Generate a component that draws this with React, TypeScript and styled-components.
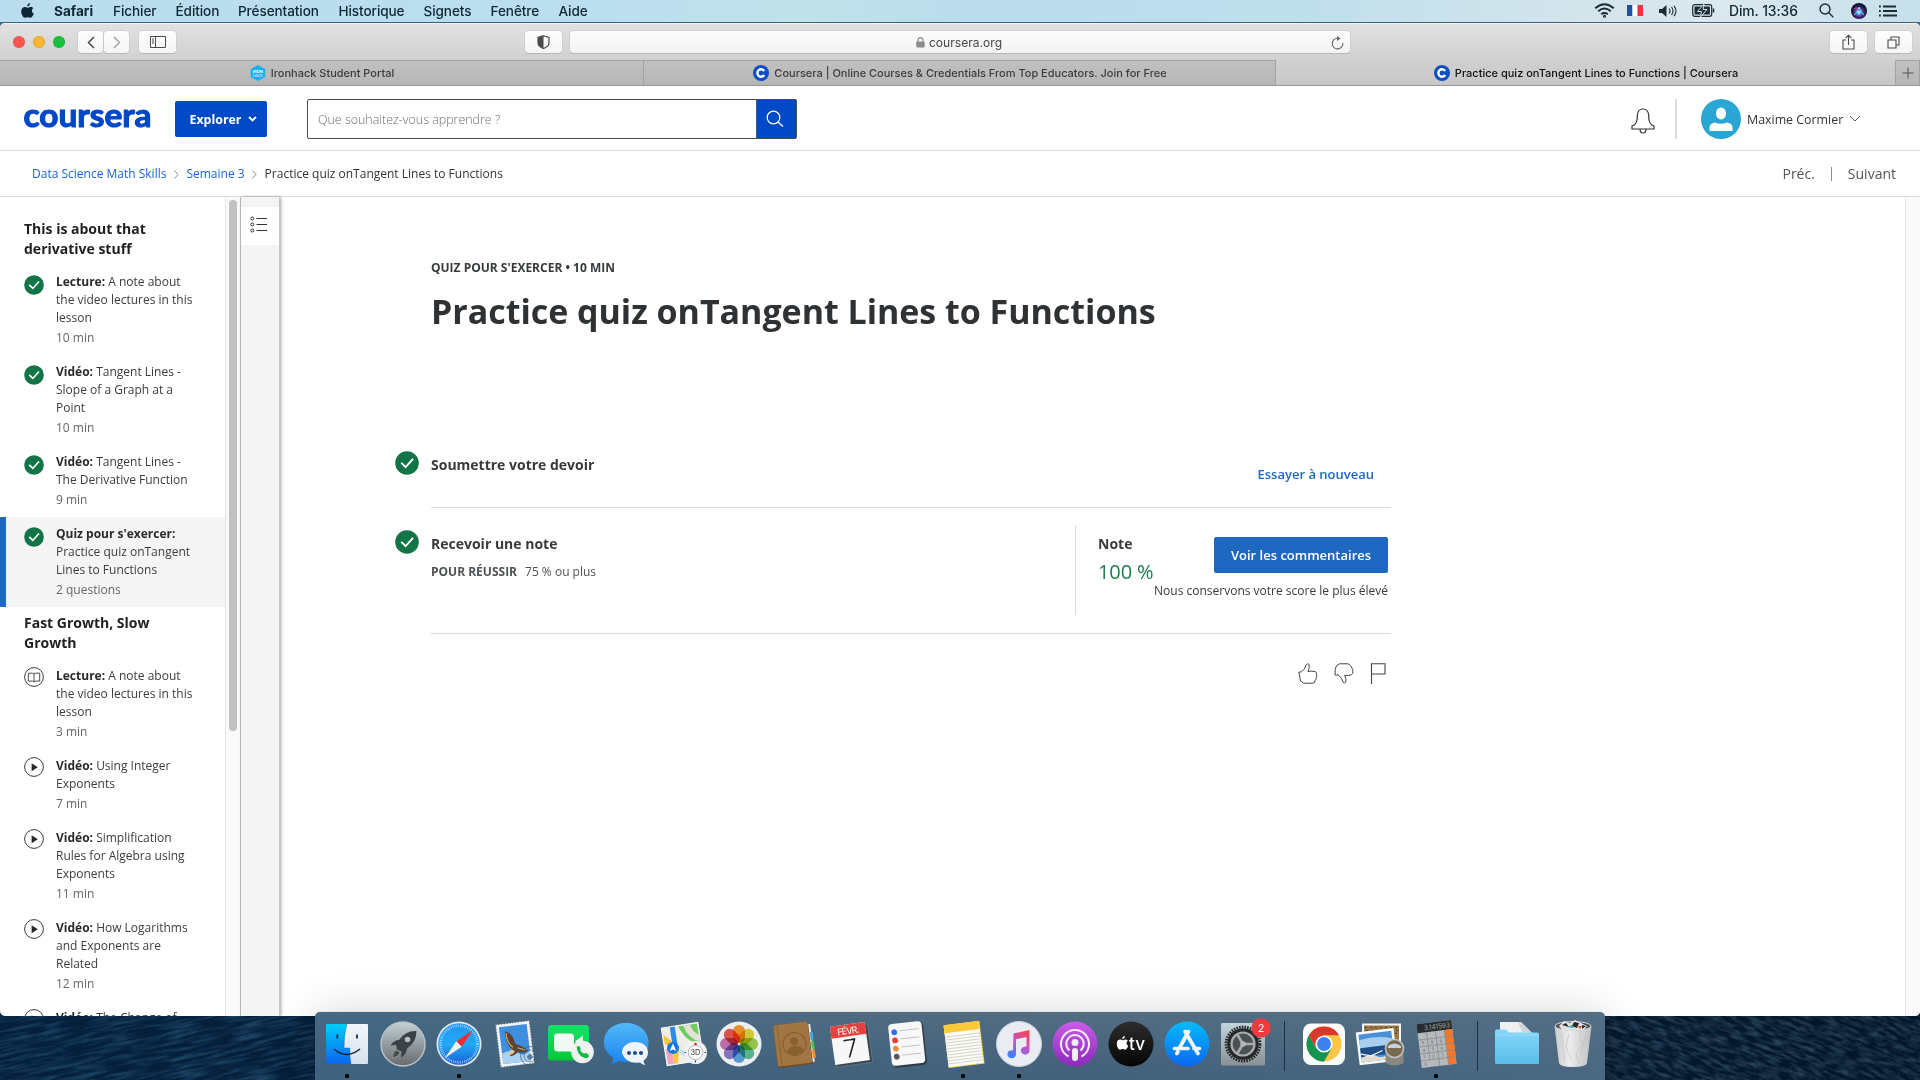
import React from 'react';
import styled, { createGlobalStyle } from 'styled-components';

const Global = createGlobalStyle`
  *, *::before, *::after { box-sizing: border-box; }
  html, body { margin: 0; padding: 0; }
  body { width: 1920px; height: 1080px; overflow: hidden; font-family: 'Open Sans', 'Noto Sans', sans-serif; color: #1f1f1f; }
  svg { display: block; flex: none; }
`;

const UI = "Inter, 'Liberation Sans', sans-serif";

/* ---------- desktop ---------- */
const Desktop = styled.div`
  position: relative;
  width: 1920px;
  height: 1080px;
  overflow: hidden;
  display: flex;
  flex-direction: column;
  background: #3f6c8e;
`;
const Sea = styled.svg`
  position: absolute;
  left: 0;
  bottom: 0;
`;
const MenuBar = styled.div`
  height: 23px;
  flex: none;
  display: flex;
  align-items: center;
  justify-content: space-between;
  padding: 0 23px 1px 21px;
  border-bottom: 1px solid #35648a;
  background: linear-gradient(90deg, #b9dcee 0%, #bcdff0 32%, #c0e2ea 42%, #b9dcee 52%, #bfdfec 68%, #d3e4ec 82%, #dbe8ee 90%, #c6dfeb 100%);
  font-family: ${UI};
  color: #0d2633;
`;
const MenuGroup = styled.div`
  display: flex;
  align-items: center;
`;
const MenuItem = styled.span<{ $w: number; $bold?: boolean }>`
  width: ${(p) => p.$w}px;
  font-size: 13.6px;
  line-height: 22px;
  font-weight: ${(p) => (p.$bold ? 700 : 450)};
  letter-spacing: ${(p) => (p.$bold ? '0' : '-0.1px')};
  white-space: nowrap;
`;
const StatusSlot = styled.span<{ $ml: number }>`
  display: block;
  margin-left: ${(p) => p.$ml}px;
`;
const Clock = styled.span`
  width: 71px;
  margin-left: 14px;
  font-size: 13.9px;
  font-weight: 450;
  letter-spacing: -0.1px;
  white-space: nowrap;
`;

/* ---------- browser window ---------- */
const Window = styled.div`
  position: relative;
  height: 993px;
  flex: none;
  display: flex;
  flex-direction: column;
  overflow: hidden;
  border-radius: 5px;
  background: #fff;
`;
const Toolbar = styled.div`
  height: 37px;
  flex: none;
  display: flex;
  align-items: center;
  padding: 0 8px 0 13px;
  border-top: 1px solid #f2f2f2;
  background: linear-gradient(#e2e1e2, #d2d1d2);
`;
const Light = styled.span<{ $c: string }>`
  width: 12px;
  height: 12px;
  margin-right: 8px;
  border-radius: 50%;
  background: ${(p) => p.$c};
  box-shadow: inset 0 0 0 0.5px rgba(0, 0, 0, 0.15);
`;
const ToolButton = styled.span<{ $w: number; $ml: number }>`
  width: ${(p) => p.$w}px;
  height: 22px;
  margin-left: ${(p) => p.$ml}px;
  display: flex;
  align-items: center;
  justify-content: center;
  border-radius: 4px;
  background: linear-gradient(#fefefe, #f4f4f4);
  box-shadow: 0 0 0 0.5px #c4c4c4, 0 1px 0.5px #ababab;
`;
const Address = styled.div`
  width: 780px;
  height: 22px;
  margin-left: 8px;
  display: flex;
  align-items: center;
  border-radius: 4px;
  background: linear-gradient(#fdfdfd, #f2f2f2);
  box-shadow: 0 0 0 0.5px #c4c4c4, 0 1px 0.5px #ababab;
  font: 400 12.1px/22px ${UI};
  color: #444;
  padding: 1px 6px 0 17px;
`;
const AddressText = styled.div`
  flex: 1;
  display: flex;
  align-items: center;
  justify-content: center;
  gap: 4px;
`;
const Tabs = styled.div`
  height: 26px;
  flex: none;
  display: flex;
  border-bottom: 1px solid #989798;
`;
const Tab = styled.div<{ $w: number; $active?: boolean }>`
  width: ${(p) => p.$w}px;
  display: flex;
  align-items: center;
  justify-content: center;
  gap: 5px;
  padding-left: 1px;
  font: 450 11px/24px ${UI};
  letter-spacing: 0;
  white-space: nowrap;
  color: ${(p) => (p.$active ? '#111' : '#3c3b3c')};
  border-top: 1px solid ${(p) => (p.$active ? '#d1d0d1' : '#a5a4a5')};
  border-right: 1px solid #a3a2a3;
  background: ${(p) => (p.$active ? 'linear-gradient(#d1d0d1, #c8c7c8)' : 'linear-gradient(#c1c0c1, #b7b6b7)')};
`;

/* ---------- site header ---------- */
const Header = styled.header`
  height: 65px;
  flex: none;
  display: flex;
  align-items: center;
  padding: 2px 59px 0 24px;
  border-bottom: 1px solid #dcdcdc;
`;
const Explore = styled.button`
  width: 92px;
  height: 36px;
  margin-left: 24px;
  padding: 0 0 0 5px;
  border: 0;
  border-radius: 2px;
  display: flex;
  align-items: center;
  justify-content: center;
  gap: 7px;
  background: #004ac8;
  color: #fff;
  font: 700 12.4px 'Open Sans', sans-serif;
`;
const Search = styled.div`
  width: 490px;
  height: 40px;
  margin-left: 40px;
  display: flex;
  border: 1px solid #4c4c4c;
  border-radius: 2px;
`;
const SearchField = styled.div`
  flex: 1;
  padding-left: 10px;
  font-size: 12.45px;
  font-weight: 300;
  line-height: 39px;
  color: #6c6c6c;
`;
const SearchButton = styled.div`
  width: 40px;
  display: flex;
  align-items: center;
  justify-content: center;
  padding-right: 4px;
  background: #004ac8;
  border-left: 1px solid #3d5a8c;
`;
const Account = styled.div`
  margin-left: auto;
  display: flex;
  align-items: center;
`;
const Bell = styled.span`
  padding-top: 3px;
`;
const Rule = styled.span`
  width: 2px;
  height: 40px;
  margin: 0 24px 0 20px;
  background: #dcdcdc;
`;
const UserName = styled.span`
  width: 97px;
  margin: 0 5px 0 6px;
  font-size: 12.4px;
  white-space: nowrap;
  color: #333;
`;

const Crumbs = styled.nav`
  height: 46px;
  flex: none;
  display: flex;
  align-items: center;
  padding: 0 24px 0 32px;
  border-bottom: 1px solid #dcdcdc;
  font-size: 12px;
  white-space: nowrap;
`;
const Crumb = styled.span<{ $link?: boolean }>`
  color: ${(p) => (p.$link ? '#1565d8' : '#333')};
`;
const CrumbArrow = styled.span`
  width: 20px;
  padding-top: 2px;
  display: flex;
  justify-content: center;
`;
const Pager = styled.div`
  margin-left: auto;
  display: flex;
  align-items: center;
  gap: 16px;
  font-size: 14px;
  color: #555;
`;
const PagerRule = styled.span`
  width: 1px;
  height: 14px;
  background: #8c8c8c;
`;

/* ---------- body ---------- */
const Body = styled.div`
  flex: 1;
  min-height: 0;
  display: flex;
`;
const Lessons = styled.aside`
  width: 225px;
  flex: none;
  overflow: hidden;
  padding-top: 16px;
`;
const SectionTitle = styled.h2`
  margin: 6px 0;
  padding: 0 24px;
  width: 200px;
  font-size: 14px;
  line-height: 20px;
  font-weight: 700;
  color: #1f1f1f;
`;
const Lesson = styled.div<{ $active?: boolean }>`
  display: flex;
  gap: 12px;
  padding: 8px 0 8px ${(p) => (p.$active ? 18 : 24)}px;
  border-left: ${(p) => (p.$active ? '6px solid #1f68c2' : '0 solid transparent')};
  background: ${(p) => (p.$active ? '#f5f5f5' : 'transparent')};
`;
const LessonIcon = styled.span<{ $done: boolean }>`
  width: 20px;
  padding-top: ${(p) => (p.$done ? 2 : 0)}px;
`;
const LessonText = styled.div`
  width: 138px;
  font-size: 12px;
  line-height: 18px;
  color: #3c3c3c;
`;
const Strong = styled.b`
  font-weight: 700;
  color: #2a2a2a;
`;
const Length = styled.div`
  padding-top: 2px;
  color: #666;
`;
const Track = styled.div`
  width: 16px;
  flex: none;
  padding: 3px 3px 0;
  border-left: 1px solid #e4e4e4;
  border-right: 1px solid #c2c2c2;
  background: #fafafa;
`;
const Thumb = styled.div`
  width: 8px;
  height: 531px;
  border-radius: 4px;
  background: #c1c1c1;
`;
const Rail = styled.div`
  width: 39px;
  flex: none;
  padding-top: 10px;
  background: #f4f4f4;
  border-right: 1px solid #c6c6c6;
  box-shadow: 1px 0 3px rgba(0, 0, 0, 0.35);
`;
const RailButton = styled.div`
  height: 38px;
  display: flex;
  align-items: center;
  padding: 0 0 4px 9px;
  border-radius: 2px;
  background: #fff;
`;
const Main = styled.main`
  flex: 1;
  padding: 62px 0 0 115px;
`;
const PageTrack = styled.div`
  width: 15px;
  flex: none;
  background: #fafafa;
  border-left: 1px solid #e6e6e6;
`;
const Kicker = styled.div`
  padding-left: 36px;
  font-size: 12px;
  line-height: 18px;
  font-weight: 700;
  letter-spacing: 0;
  color: #373a3c;
`;
const Title = styled.h1`
  margin: 11px 0 0;
  padding-left: 36px;
  height: 117px;
  font-size: 34px;
  line-height: 46px;
  font-weight: 700;
  letter-spacing: -0.03px;
  white-space: nowrap;
  color: #2f3234;
`;
const Step = styled.section<{ $h: number }>`
  display: flex;
  width: 996px;
  height: ${(p) => p.$h}px;
`;
const StepMark = styled.div<{ $pt: number }>`
  width: 36px;
  padding-top: ${(p) => p.$pt}px;
`;
const StepBody = styled.div<{ $pt: number }>`
  width: 960px;
  display: flex;
  padding-top: ${(p) => p.$pt}px;
  border-bottom: 1px solid #d8dadb;
`;
const StepCopy = styled.div`
  flex: 1;
`;
const StepTitle = styled.div`
  font-size: 14px;
  line-height: 20px;
  font-weight: 700;
  color: #373a3c;
`;
const Criteria = styled.div`
  padding-top: 8px;
  display: flex;
  gap: 8px;
  font-size: 12px;
  line-height: 20px;
  font-weight: 400;
  color: #4f5254;
`;
const Retry = styled.div`
  padding: 8px 17px 0 0;
  font-size: 13px;
  line-height: 22px;
  font-weight: 600;
  color: #1f68c2;
`;
const Grade = styled.div`
  width: 316px;
  height: 90px;
  margin-top: -9px;
  padding: 9px 3px 0 22px;
  display: flex;
  flex-direction: column;
  border-left: 1px solid #d8dadb;
`;
const GradeRow = styled.div`
  height: 48px;
  display: flex;
  justify-content: space-between;
`;
const Score = styled.div`
  padding-top: 4px;
  font-size: 20px;
  line-height: 28px;
  font-weight: 400;
  letter-spacing: -0.1px;
  color: #1b7d4f;
`;
const Feedback = styled.button`
  width: 174px;
  height: 36px;
  margin-top: 3px;
  padding: 0;
  border: 0;
  border-radius: 2px;
  background: #1f68c2;
  color: #fff;
  font: 600 13px 'Open Sans', sans-serif;
`;
const GradeNote = styled.div`
  align-self: flex-end;
  font-size: 12px;
  line-height: 18px;
  color: #373a3c;
`;
const Reactions = styled.div`
  width: 996px;
  padding: 29px 5px 0 0;
  display: flex;
  justify-content: flex-end;
  gap: 16px;
`;

/* ---------- dock ---------- */
const DockShade = styled.div`
  position: absolute;
  left: 235px;
  bottom: 0;
  width: 1450px;
  height: 148px;
  overflow: hidden;
  padding: 80px 80px 0;
`;
const Dock = styled.div`
  width: 1290px;
  height: 68px;
  display: flex;
  padding: 4px 4px 0;
  border-radius: 5px 5px 0 0;
  background: linear-gradient(90deg, rgba(60, 100, 130, 0.6), rgba(70, 100, 125, 0.2) 60%, rgba(80, 110, 135, 0.6)), linear-gradient(#566f84, #405f79);
  box-shadow: 0 0 44px rgba(0, 0, 0, 0.16), 0 0 1px rgba(0, 0, 0, 0.4);
`;
const DockItem = styled.div`
  width: 56px;
  display: flex;
  flex-direction: column;
  align-items: center;
`;
const Running = styled.span`
  width: 4px;
  height: 4px;
  margin-top: 2px;
  border-radius: 1.5px;
  background: #000;
`;
const DockRule = styled.span`
  width: 1px;
  height: 50px;
  margin: 5px 11.5px 5px 12.5px;
  background: #16324a;
`;

/* ---------- icons ---------- */
const Check = ({ size }: { size: number }) => (
  <svg width={size} height={size} viewBox="0 0 24 24">
    <circle cx="12" cy="12" r="11.8" fill="#137547" />
    <path d="M6.3 11.9 10.6 16.1 18 7.9" fill="none" stroke="#fff" strokeWidth="1.9" />
  </svg>
);
const Play = () => (
  <svg width="20" height="20" viewBox="0 0 20 20">
    <circle cx="10" cy="10" r="9.4" fill="#fff" stroke="#373a3c" strokeWidth="1" />
    <path d="M7.6 6.2v8L13.8 10.3z" fill="#25292b" />
  </svg>
);
const Book = () => (
  <svg width="20" height="20" viewBox="0 0 20 20" fill="none" stroke="#373a3c">
    <circle cx="10" cy="10" r="9.4" />
    <path d="M4.3 6.2h4.2q1.5 0 1.5 1 0-1 1.5-1h4.2v7.9h-4.4L10 15l-1.3-.9H4.3zM10 7v8" strokeWidth=".9" />
  </svg>
);
const CourseraMark = () => (
  <svg width="16" height="16" viewBox="0 0 16 16">
    <circle cx="8" cy="8" r="8" fill="#0f4fc4" />
    <path d="M11.2 10A3.7 3.7 0 1 1 11.2 6" fill="none" stroke="#fff" strokeWidth="2.4" />
  </svg>
);
const Chevron = ({ w, c, s = 1 }: { w: number; c: string; s?: number }) => (
  <svg width={w} height={w / 2 + 2} viewBox={`0 0 ${w} ${w / 2 + 2}`}>
    <path d={`M1 1l${w / 2 - 1} ${w / 2 - 1} ${w / 2 - 1} -${w / 2 - 1}`} fill="none" stroke={c} strokeWidth={s} />
  </svg>
);
const Apple = ({ w, c }: { w: number; c: string }) => (
  <svg width={w} height={w * 1.17} viewBox="0 0 14 16.4">
    <path fill={c} d="M9.8 0c.2 1.9-1.400 3.700-3.200 3.600C6.400 1.900 8 .2 9.800 0zM13.300 5.600c-2.300 1.500-2 4.700.5 5.700-.6 1.800-2.100 4.700-3.800 4.700-1.100 0-1.500-.7-2.800-.7s-1.700.7-2.800.7C2.200 16 .2 12.200.2 9c0-3.100 2-4.800 4-4.800 1.300 0 2.200.8 3.100.8.800 0 2-.9 3.600-.9 1 .1 1.900.6 2.400 1.500z" />
  </svg>
);

const I = ({ children }: { children: React.ReactNode }) => (
  <svg width="56" height="56" viewBox="0 0 56 56">{children}</svg>
);

const Finder = () => (
  <I>
    <defs>
      <linearGradient id="fa" x2="0" y2="1"><stop stopColor="#00cdfb" /><stop offset="1" stopColor="#0a66f0" /></linearGradient>
      <linearGradient id="fb" x2="0" y2="1"><stop stopColor="#f4f5fa" /><stop offset="1" stopColor="#d5e2ef" /></linearGradient>
    </defs>
    <rect x="7" y="8" width="42" height="40" rx="1" fill="url(#fa)" />
    <path d="M28 8h20a1 1 0 0 1 1 1v38a1 1 0 0 1-1 1H32q-1.500-8-1.200-16H25q0-14 3-24z" fill="url(#fb)" />
    <path d="M28 8q-3 10-3 24h5.800q-.3 8 1.200 16" fill="none" stroke="#1a6fb5" strokeWidth=".5" />
    <path d="M18.300 18.500v4M38 18.500v4" stroke="#12314b" strokeWidth="1.800" />
    <path d="M15 33q12 11 26 0" fill="none" stroke="#0d2236" strokeWidth="1.500" />
  </I>
);
const Launchpad = () => (
  <I>
    <defs><linearGradient id="lp" x2="0" y2="1"><stop stopColor="#c3d0d6" /><stop offset="1" stopColor="#676a6d" /></linearGradient></defs>
    <circle cx="28" cy="28" r="22" fill="url(#lp)" stroke="#b9c3c8" strokeWidth="1.400" />
    <path d="M41.500 15q-11-.5-17.500 9-5 0-8.500 5.500l5.500-.5 1 4.500 4.500 2-.5 6q5.500-3.500 6-9Q41.500 26 41.500 15z" fill="#3c4145" />
    <path d="M22 34q-4 1-4.500 8 6-1.500 7.500-5.500z" fill="#44494c" stroke="#a5aaad" strokeWidth=".6" />
    <circle cx="32.500" cy="23.500" r="2.800" fill="#b4bec3" />
  </I>
);
const Safari = () => (
  <I>
    <defs><linearGradient id="sf" x2="0" y2="1"><stop stopColor="#2196f5" /><stop offset=".5" stopColor="#21a9f6" /><stop offset="1" stopColor="#1b5fd8" /></linearGradient></defs>
    <circle cx="28" cy="28" r="22.500" fill="#e3e9f0" />
    <circle cx="28" cy="28" r="20.800" fill="url(#sf)" />
    <circle cx="28" cy="28" r="18.400" fill="none" stroke="#d5ebfc" strokeWidth="2.500" strokeDasharray=".6 1.300" />
    <path d="M42 14 30.700 30.700 25.300 25.300z" fill="#f02c2f" />
    <path d="M14 42 30.700 30.700 25.300 25.300z" fill="#f2f2f4" />
  </I>
);
const Mail = () => (
  <I>
    <g transform="rotate(-7 28 28)">
      <rect x="11" y="6.500" width="34" height="43" fill="#f3f3f3" />
      <rect x="11" y="6.500" width="34" height="43" fill="none" stroke="#4f6b82" strokeWidth="1.200" strokeDasharray="1.200 1.600" />
      <rect x="14" y="9.500" width="28" height="37" fill="#3f8fe0" />
      <path d="M14 36q8-4 15 1t13-1v10.500H14z" fill="#a9d2f2" />
      <path d="M19.500 14q5.500 2 7.500 8 1 4 2 6.500 7 2.500 11 8-4 2.500-10-.5-3 3.500-8.500 3.500 1.500-3.500 3-6.500-6.500-7-5-19z" fill="#5d4532" />
      <path d="M24 33q-3 1-5 5 6 1 8-3z" fill="#e0c8a4" /><path d="M20.500 16q-1 9 5 15M30 32l7 3" fill="none" stroke="#c9a67c" strokeWidth="1.200" />
    </g>
    <g fill="none" stroke="#3c5468" opacity=".65"><circle cx="43" cy="40" r="9.500" /><circle cx="43" cy="40" r="6" /><circle cx="43" cy="41" r="2.400" fill="#1f4f80" /></g>
  </I>
);
const FaceTime = () => (
  <I>
    <defs><linearGradient id="ft" x2="0" y2="1"><stop stopColor="#14e368" /><stop offset="1" stopColor="#06c736" /></linearGradient></defs>
    <rect x="5" y="9" width="41" height="35.500" rx="3.500" fill="url(#ft)" />
    <rect x="11" y="17.500" width="20" height="18" rx="3.500" fill="#f2f8f4" />
    <path d="M32.500 25l7.500-5.500v15L32.500 31z" fill="#f2f8f4" />
    <circle cx="39.500" cy="36" r="11.300" fill="#eff1f0" />
    <path d="M33.800 30.800q2.200-2.300 4 1.400-1.300 1.600.2 3.400 1.600 2 3.600 2 1.600-1.400 4 1.200 1.200 1.600-.8 3-2.200 1.200-5.800-1-5.200-3.600-5.200-10z" fill="#11bb45" />
  </I>
);
const Messages = () => (
  <I>
    <defs><linearGradient id="ms" x2="0" y2="1"><stop stopColor="#52b9fa" /><stop offset="1" stopColor="#1b82ef" /></linearGradient></defs>
    <path d="M27 7c13 0 22.500 8 22.500 19.500S40 46 27 46q-4 0-7-1-4 3-7.500 3 2-3 1.500-6.500Q5 36 5 26.500C5 15 14 7 27 7z" fill="url(#ms)" />
    <path d="M36 26c7.500 0 13 4 13 10.500 0 4-2 6.500-4.500 8.200q0 2.500 2 4.300-3.500-.3-5.500-2.500-14 2-18-9.500C23 30 28.500 26 36 26z" fill="#edf4fc" />
    <g fill="#1c4c88"><circle cx="30" cy="37" r="2" /><circle cx="36" cy="37" r="2" /><circle cx="42" cy="37" r="2" /></g>
  </I>
);
const Maps = () => (
  <I>
    <g transform="rotate(-9 28 28)">
      <rect x="9" y="9" width="37" height="38" fill="#efeee6" />
      <path d="M26 10h19v20Q32 28 26 10z" fill="#6ccc63" /><path d="M31 10q3 14 14 18v-7q-6-4-7-11z" fill="#e4e0d6" />
      <path d="M10 16l14 14-4 16h-4V30l-6-5z" fill="#fcc43e" /><path d="M10 30l6 5v11h-6z" fill="#f1a5bd" />
      <path d="M20 9.500v20" stroke="#2b8ae3" strokeWidth="5" />
      <path d="M24 34l10 10" stroke="#bcdcf0" strokeWidth="4" />
      <rect x="9" y="9" width="37" height="38" fill="none" stroke="#fafafa" />
    </g>
    <circle cx="18" cy="32" r="6" fill="#1377e6" /><path d="M18 27.500l3.300 7.500L18 33.500 14.700 35z" fill="#fff" />
    <circle cx="40.500" cy="36.500" r="11.500" fill="#f0f2f4" /><circle cx="40.500" cy="36.500" r="7.200" fill="#fff" stroke="#8e969c" strokeWidth=".7" />
    <path d="M40.500 44.500v2M31 36.500h-1.500M51 36.500h-1.500" stroke="#333" />
    <text x="40.500" y="39.300" fontFamily="Inter, sans-serif" fontSize="7.500" textAnchor="middle" fill="#333">3D</text>
    <circle cx="40.500" cy="28" r="1.300" fill="#e22" />
  </I>
);
const Photos = () => (
  <I>
    <circle cx="28" cy="28" r="22.500" fill="#eceef0" />
    {['#f9962b', '#e3d53a', '#a0cf50', '#5fbf94', '#5ea5df', '#8d7dc8', '#c777b4', '#ec5a52'].map((c, i) => (
      <rect key={c} x="22" y="9" width="12" height="18" rx="6" fill={c} style={{ mixBlendMode: 'multiply' }} transform={`rotate(${i * 45} 28 28)`} />
    ))}
  </I>
);
const Contacts = () => (
  <I>
    <g transform="rotate(-7 28 28)">
      <path d="M41 10h4.500v38H41z" fill="#e8e8e8" /><path d="M44 18h3v8h-3z" fill="#3fa9e0" /><path d="M44 27h3v8h-3z" fill="#52c35b" /><path d="M44 36h3v8h-3z" fill="#f0932c" />
      <rect x="8.500" y="7" width="35" height="43" rx="2" fill="#6f4a22" /><rect x="8.500" y="7" width="34.500" height="41.500" rx="2" fill="#a27643" />
      <path d="M12.500 7v41.500" stroke="#8b6234" />
      <circle cx="27.500" cy="28" r="11.500" fill="none" stroke="#86602f" strokeWidth="1.200" /><circle cx="27.500" cy="25" r="4.200" fill="#86602f" /><path d="M19 35q2-5 8.500-5t8.500 5q-8 8-17 0z" fill="#86602f" />
    </g>
  </I>
);
const CalendarIcon = () => (
  <I>
    <g transform="rotate(-8 28 28)">
      <path d="M11 11h36v38H11z" fill="#3b4751" stroke="#77828b" strokeWidth=".6" />
      <rect x="9.500" y="8" width="35" height="38.500" fill="#f7f7f7" /><rect x="9.500" y="8" width="35" height="12" fill="#e8403f" />
      <text x="27" y="17.700" fontFamily="Inter, sans-serif" fontSize="9" textAnchor="middle" textLength="22" fill="#fff">FÉVR.</text>
      <text x="27" y="41" fontFamily="'Open Sans', sans-serif" fontSize="25" fontWeight="300" textAnchor="middle" fill="#111" stroke="#111" strokeWidth=".3">7</text>
    </g>
  </I>
);
const Reminders = () => (
  <I>
    <g transform="rotate(-6 28 28)">
      <rect x="12" y="7.500" width="34" height="43" rx="4" fill="#2f3b45" /><rect x="11" y="6.500" width="33.500" height="42" rx="4" fill="#f8f8f8" />
      {['#2f6df3', '#e63d3a', '#ee8b34', '#53585c'].map((c, i) => (
        <g key={c}><circle cx="16.500" cy={15 + i * 8.2} r="2.900" fill={c} /><path d={`M22 ${14 + i * 8.2}h19`} stroke="#b5b8ba" strokeWidth=".8" /></g>
      ))}
    </g>
  </I>
);
const Notes = () => (
  <I>
    <g transform="rotate(-7 28 28)">
      <rect x="11" y="7" width="36" height="43" fill="#f7d768" /><rect x="11" y="8" width="35" height="41" fill="#fcfbf5" /><rect x="11" y="7" width="35" height="8" fill="#fcca38" />
      {[0, 1, 2, 3, 4, 5, 6, 7, 8, 9].map((i) => <path key={i} d={`M11 ${19 + i * 3}h35`} stroke="#cbcbc6" strokeWidth=".8" />)}
    </g>
  </I>
);
const Music = () => (
  <I>
    <defs><linearGradient id="mu" x1=".8" x2=".3" y2="1"><stop stopColor="#f5484c" /><stop offset=".5" stopColor="#c354cd" /><stop offset="1" stopColor="#3b83f7" /></linearGradient></defs>
    <circle cx="28" cy="28" r="22.500" fill="#e9ecf2" stroke="#cfd4da" />
    <path d="M22.500 17.500 38.500 14v20.500a4.300 4 0 1 1-3-3.700V21L25 23.300v14.900a4.300 4 0 1 1-3-3.700z" fill="url(#mu)" />
  </I>
);
const Podcasts = () => (
  <I>
    <defs><linearGradient id="po" x2="0" y2="1"><stop stopColor="#cb5ce8" /><stop offset="1" stopColor="#8a2abb" /></linearGradient></defs>
    <circle cx="28" cy="28" r="22.500" fill="url(#po)" />
    <g fill="none" stroke="#f5ebfa" strokeWidth="2"><path d="M21.500 40.500a14 14 0 1 1 13 0" /><path d="M22.500 34.500a8.700 8.700 0 1 1 11 0" /></g>
    <circle cx="28" cy="26.500" r="3.500" fill="#f5ebfa" /><rect x="25" y="32" width="6" height="13" rx="3" fill="#f5ebfa" />
  </I>
);
const TV = () => (
  <I>
    <defs><linearGradient id="tv" x2="0" y2="1"><stop stopColor="#2d2d2f" /><stop offset="1" stopColor="#050506" /></linearGradient></defs>
    <circle cx="28" cy="28" r="22.500" fill="url(#tv)" />
    <g transform="translate(13.500 20)"><Apple w={12} c="#fff" /></g>
    <text x="26" y="34" fontFamily="Inter, sans-serif" fontSize="17" fontWeight="500" textLength="16" lengthAdjust="spacingAndGlyphs" fill="#fff">tv</text>
  </I>
);
const AppStore = () => (
  <I>
    <defs><linearGradient id="as" x2="0" y2="1"><stop stopColor="#06bdfc" /><stop offset="1" stopColor="#0b66ee" /></linearGradient></defs>
    <circle cx="28" cy="28" r="22.500" fill="url(#as)" />
    <g stroke="#eff6fd" strokeWidth="3.700" strokeLinecap="round"><path d="M29.500 15.500 21 31M19 35.500l-1.200 2M26 15.500l13 22M15.500 32.500h13.500M35 32.500h5.500" /></g>
  </I>
);
const Settings = () => (
  <I>
    <defs><linearGradient id="se" x2="0" y2="1"><stop stopColor="#c2d5dc" /><stop offset="1" stopColor="#8a9093" /></linearGradient></defs>
    <rect x="6" y="7" width="44" height="42.500" rx="1.500" fill="url(#se)" />
    <circle cx="28" cy="28" r="17" fill="none" stroke="#24282a" strokeWidth="2.800" strokeDasharray="1.600 1.100" />
    <circle cx="28" cy="28" r="15.800" fill="#25292b" /><circle cx="28" cy="28" r="11.500" fill="#4c5153" stroke="#a6acaf" strokeWidth="2.200" />
    <path d="M28 28h11.500M28 28l-6-10M28 28l-6 10" stroke="#a6acaf" strokeWidth="2.500" /><circle cx="28" cy="28" r="2.800" fill="#b4b9bb" />
    <circle cx="46" cy="12" r="9.700" fill="#f23a3d" />
    <text x="46" y="15.800" fontFamily="Inter, sans-serif" fontSize="11" textAnchor="middle" fill="#fff">2</text>
  </I>
);
const Chrome = () => (
  <I>
    <rect x="7" y="7.500" width="42" height="41.500" rx="8" fill="#fafafa" />
    <circle cx="28" cy="28" r="17.500" fill="#fdc745" />
    <path d="M12.850 19.250A17.500 17.500 0 0 0 28 45.500L35.600 32.400 28 28 20.400 32.400z" fill="#159451" />
    <path d="M12.850 19.250A17.500 17.500 0 0 1 43.150 19.250H28l-7.600 13.100z" fill="#d9382d" />
    <circle cx="28" cy="28" r="8.600" fill="#fff" /><circle cx="28" cy="28" r="6.900" fill="#3f80ee" />
  </I>
);
const Preview = () => (
  <I>
    <rect x="10" y="7.500" width="39" height="33" fill="#f4f4f2" /><rect x="12" y="9.500" width="35" height="29" fill="#9a7646" /><path d="M13 11.500h33M14 14.500h32M13 17.500h33" stroke="#5b4126" strokeDasharray="2 3" />
    <g transform="rotate(-7 26 30)">
      <rect x="5.500" y="14" width="38" height="33" fill="#fafafa" /><rect x="8" y="16.500" width="33" height="28" fill="#4a90d9" /><path d="M8 22q17-3 33 2v7H8z" fill="#a8cfee" />
      <rect x="8" y="30" width="33" height="9" fill="#1e4d87" /><path d="M8 40q10-4 16 0t17-3v7.500H8z" fill="#e3ddd0" /><path d="M8 36l10 3 12-4" stroke="#f3f7fa" fill="none" strokeWidth="1.300" />
    </g>
    <path d="M33.500 36h18v11q-9 5-18 0z" fill="#8b8880" /><circle cx="42.500" cy="32.500" r="9" fill="#7a694e" stroke="#bcc0c2" strokeWidth="1.600" /><path d="M36 30q6-5 13 0v2H36z" fill="#c3d3df" />
  </I>
);
const Calculator = () => (
  <I>
    <g transform="rotate(-7 28 28)">
      <rect x="11" y="6" width="35" height="44" fill="#b7babc" /><rect x="11" y="6" width="35" height="9" fill="#272b2e" />
      <text x="44" y="13.200" fontFamily="Inter, sans-serif" fontSize="7.200" textAnchor="end" textLength="26" lengthAdjust="spacingAndGlyphs" fill="#98a09f">3.141593</text>
      <rect x="38" y="15" width="8" height="35" fill="#f5782a" />
      <g stroke="#7f8486" strokeWidth=".7"><path d="M11 22h35M11 29h35M11 36h35M11 43h35M20 15v28M29 15v35M38 15v35" /></g>
      <g fontFamily="Inter, sans-serif" fontSize="4" fill="#555">
        {['789', '456', '123'].map((r, j) => r.split('').map((d, i) => <text key={d} x={14 + i * 9} y={27 + j * 7}>{d}</text>))}
        <text x="14" y="48">0</text>
      </g>
    </g>
  </I>
);
const Folder = () => (
  <I>
    <defs><linearGradient id="fo" x2="0" y2="1"><stop stopColor="#86d6f9" /><stop offset="1" stopColor="#5bbdea" /></linearGradient></defs>
    <path d="M11 6h21l11 11v10H11z" fill="#f0f0f0" /><path d="M29 6l4 10 10 1L32 6z" fill="#d2d4d5" />
    <path d="M6 15q0-1.500 1.500-1.500H17l3 3h28q2 0 2 1.500v28.500q0 1.500-1.500 1.500h-41Q6 48 6 46.500z" fill="url(#fo)" />
    <path d="M6 19h44" stroke="#a4e2fc" strokeWidth=".7" />
  </I>
);
const Trash = () => (
  <I>
    <defs><linearGradient id="tr"><stop stopColor="#c9c9c9" /><stop offset=".4" stopColor="#ededed" /><stop offset="1" stopColor="#bfc0c1" /></linearGradient></defs>
    <ellipse cx="28" cy="10" rx="18" ry="4.500" fill="#4b5156" stroke="#d5d6d7" />
    <path d="M14 10l5-5 6 2 5-3 6 3 6 3-3 4H17z" fill="#dfe2e4" /><path d="M17 9l4-2 3 4zM29 6l5 1-2 5-5-2zM37 9l4 1-4 3z" fill="#2f2522" /><path d="M23 11l4-2 2 3z" fill="#29b0a4" /><path d="M33 10l4 0-2 3z" fill="#c9502f" />
    <path d="M9.500 10Q13 14.500 28 14.500t18.500-4.500L42 47q-1 4-14 4t-14-4z" fill="url(#tr)" />
    <path d="M16 18l4 28M24 17l-3 14 5 12M34 17l3 12-6 9 3 9M41 18l-5 20" stroke="#c2c4c5" strokeWidth=".8" fill="none" />
  </I>
);

/* ---------- data ---------- */
type LessonData = { kind: string; name: string; length: string; icon: 'done' | 'play' | 'book'; active?: boolean };
const sections: { title: string; lessons: LessonData[] }[] = [
  {
    title: 'This is about that derivative stuff',
    lessons: [
      { kind: 'Lecture:', name: 'A note about the video lectures in this lesson', length: '10 min', icon: 'done' },
      { kind: 'Vidéo:', name: 'Tangent Lines - Slope of a Graph at a Point', length: '10 min', icon: 'done' },
      { kind: 'Vidéo:', name: 'Tangent Lines - The Derivative Function', length: '9 min', icon: 'done' },
      { kind: "Quiz pour s'exercer:", name: 'Practice quiz onTangent Lines to Functions', length: '2 questions', icon: 'done', active: true },
    ],
  },
  {
    title: 'Fast Growth, Slow Growth',
    lessons: [
      { kind: 'Lecture:', name: 'A note about the video lectures in this lesson', length: '3 min', icon: 'book' },
      { kind: 'Vidéo:', name: 'Using Integer Exponents', length: '7 min', icon: 'play' },
      { kind: 'Vidéo:', name: 'Simplification Rules for Algebra using Exponents', length: '11 min', icon: 'play' },
      { kind: 'Vidéo:', name: 'How Logarithms and Exponents are Related', length: '12 min', icon: 'play' },
      { kind: 'Vidéo:', name: 'The Change of', length: '', icon: 'play' },
    ],
  },
];
const menus: [string, number][] = [['Fichier', 62.5], ['Édition', 62.5], ['Présentation', 100.5], ['Historique', 85], ['Signets', 67], ['Fenêtre', 68], ['Aide', 40]];
const dock: { icon: React.FC; running?: boolean }[][] = [
  [
    { icon: Finder, running: true }, { icon: Launchpad }, { icon: Safari, running: true }, { icon: Mail }, { icon: FaceTime }, { icon: Messages },
    { icon: Maps }, { icon: Photos }, { icon: Contacts }, { icon: CalendarIcon }, { icon: Reminders }, { icon: Notes, running: true },
    { icon: Music, running: true }, { icon: Podcasts }, { icon: TV }, { icon: AppStore }, { icon: Settings },
  ],
  [{ icon: Chrome }, { icon: Preview }, { icon: Calculator, running: true }],
  [{ icon: Folder }, { icon: Trash }],
];

export default function App() {
  return (
    <Desktop>
      <Global />
      <Sea width="1920" height="72" viewBox="0 0 1920 72">
        <defs>
          <linearGradient id="sea"><stop stopColor="#04203c" /><stop offset=".5" stopColor="#061c33" /><stop offset="1" stopColor="#041629" /></linearGradient>
          <filter id="swell" x="0" y="0" width="100%" height="100%" colorInterpolationFilters="sRGB">
            <feTurbulence type="fractalNoise" baseFrequency="0.03 0.3" numOctaves="4" seed="8" />
            <feColorMatrix values="0 0 0 0 .16  0 0 0 0 .34  0 0 0 0 .48  2.200 0 0 0 -.85" />
          </filter>
          <filter id="ripples" x="0" y="0" width="100%" height="100%" colorInterpolationFilters="sRGB">
            <feTurbulence type="fractalNoise" baseFrequency="0.07 0.3" numOctaves="4" seed="3" />
            <feColorMatrix values="0 0 0 0 .22  0 0 0 0 .34  0 0 0 0 .44  2.200 0 0 0 -.8" />
          </filter>
        </defs>
        <rect width="1920" height="72" fill="url(#sea)" />
        <g transform="rotate(-12 160 36)"><rect x="-60" y="-60" width="480" height="220" filter="url(#swell)" opacity=".7" /></g>
        <g transform="rotate(20 1760 36)"><rect x="1540" y="-120" width="480" height="320" filter="url(#ripples)" opacity=".7" /></g>
      </Sea>

      <MenuBar>
        <MenuGroup>
          <Apple w={13} c="#0d2633" />
          <StatusSlot $ml={20} />
          <MenuItem $w={59} $bold>Safari</MenuItem>
          {menus.map(([m, w]) => <MenuItem key={m} $w={w}>{m}</MenuItem>)}
        </MenuGroup>
        <MenuGroup>
          <svg width="21" height="15" viewBox="0 0 21 15" fill="none" stroke="#1b2c37" strokeWidth="1.900">
            <path d="M1.200 5.200Q10.500-2.800 19.800 5.200M4.200 8.200Q10.500 3 16.800 8.200M7.200 11.200q3.300-2.500 6.600 0" /><circle cx="10.500" cy="13.300" r=".6" />
          </svg>
          <StatusSlot $ml={12}><svg width="16" height="11"><path d="M0 0h5.500v11H0z" fill="#22509f" /><path d="M5.500 0h5v11h-5z" fill="#fff" /><path d="M10.500 0H16v11h-5.500z" fill="#ee3341" /></svg></StatusSlot>
          <StatusSlot $ml={16}>
            <svg width="18" height="12" viewBox="0 0 18 12"><path d="M0 4h3l4.500-4v12L3 8H0z" fill="#1b2c37" /><path d="M10 3.500q2 2.500 0 5M12.500 2q3 4 0 8M15 .8q4 5.200 0 10.400" fill="none" stroke="#1b2c37" strokeWidth="1.100" /></svg>
          </StatusSlot>
          <StatusSlot $ml={15}>
            <svg width="23" height="13" viewBox="0 0 23 13"><rect x=".7" y=".7" width="19" height="11.600" rx="2" fill="none" stroke="#1b2c37" strokeWidth="1.200" /><rect x="2.500" y="2.500" width="15.400" height="8" fill="#1b2c37" /><path d="M12 0 5.500 7.500h4L8.500 13 15 5.500h-4z" fill="#1b2c37" stroke="#cfe2ec" strokeWidth="1" /><path d="M21.500 4.500v4" stroke="#1b2c37" strokeWidth="1.500" /></svg>
          </StatusSlot>
          <Clock>Dim. 13:36</Clock>
          <StatusSlot $ml={19}><svg width="15" height="15" viewBox="0 0 15 15" fill="none" stroke="#1b2c37" strokeWidth="1.400"><circle cx="6" cy="6" r="5" /><path d="M9.600 9.600l4.700 4.700" /></svg></StatusSlot>
          <StatusSlot $ml={17}>
            <svg width="16" height="16" viewBox="0 0 16 16"><defs><radialGradient id="si" cx=".5" cy=".58"><stop stopColor="#f4fbff" /><stop offset=".25" stopColor="#58a8e8" /><stop offset=".55" stopColor="#5a2b8c" /><stop offset=".9" stopColor="#12142f" /></radialGradient></defs><circle cx="8" cy="8" r="8" fill="url(#si)" /><path d="M3 12Q7 10 8 4q1.500 5 5 8" fill="none" stroke="#6fe0f0" /><path d="M3 6q3-3 5 2" fill="none" stroke="#e0499b" /></svg>
          </StatusSlot>
          <StatusSlot $ml={12}><svg width="18" height="12" viewBox="0 0 18 12" stroke="#1b2c37" strokeWidth="1.800"><path d="M0 1.500h1.800M4 1.500h13M0 6h1.800M4 6h14M0 10.500h1.800M4 10.500h14" /></svg></StatusSlot>
        </MenuGroup>
      </MenuBar>

      <Window>
        <Toolbar>
          <Light $c="#fc5652" /><Light $c="#fdb532" /><Light $c="#18c23f" />
          <ToolButton $w={25} $ml={5}><svg width="8" height="13" fill="none" stroke="#4a4a4a" strokeWidth="1.500"><path d="M7 1 1.500 6.500 7 12" /></svg></ToolButton>
          <ToolButton $w={25} $ml={1}><svg width="8" height="13" fill="none" stroke="#a5a5a5" strokeWidth="1.500"><path d="M1 1l5.500 5.500L1 12" /></svg></ToolButton>
          <ToolButton $w={37} $ml={10}><svg width="16" height="12" fill="none" stroke="#4a4a4a"><path d="M.5.500h15v11H.500zM5.500.500v11M2 3h2M2 5h2M2 7h2" /></svg></ToolButton>
          <ToolButton $w={37} $ml={349}><svg width="13" height="14" viewBox="0 0 13 14"><path d="M6.500.7 12 2.500v5q0 4-5.500 6-5.500-2-5.500-6v-5z" fill="none" stroke="#4a4a4a" strokeWidth="1.200" /><path d="M6.500.7v12.800q-5.500-2-5.500-6v-5z" fill="#4a4a4a" /></svg></ToolButton>
          <Address>
            <AddressText>
              <svg width="9" height="11" viewBox="0 0 9 11"><rect x=".3" y="4.500" width="8.400" height="6" rx="1" fill="#8b8b8b" /><path d="M2 5V3q0-2.400 2.500-2.400T7 3v2" fill="none" stroke="#8b8b8b" strokeWidth="1.200" /></svg>
              coursera.org
            </AddressText>
            <svg width="13" height="14" viewBox="0 0 13 14"><path d="M11.800 7A5.300 5.300 0 1 1 6.500 2.300" fill="none" stroke="#666" strokeWidth="1.100" /><path d="M6 0l3.600 2.500L6 5z" fill="#666" /></svg>
          </Address>
          <ToolButton $w={37} $ml={480}><svg width="13" height="16" fill="none" stroke="#4a4a4a" strokeWidth="1.100"><path d="M4 6H1v9h11V6H9M6.500 11V1.200M3.700 4l2.800-2.800L9.300 4" /></svg></ToolButton>
          <ToolButton $w={37} $ml={8}><svg width="13" height="13" fill="none" stroke="#4a4a4a" strokeWidth="1.100"><path d="M1 4h8v8H1zM4 4V1h8v8H9" /></svg></ToolButton>
        </Toolbar>
        <Tabs>
          <Tab $w={644}>
            <svg width="16" height="16" viewBox="0 0 16 16"><path d="M8 0l7.300 4v8L8 16 .7 12V4z" fill="#15b2f0" /><text x="8" y="7.500" fontFamily="Inter, sans-serif" fontSize="4" fontWeight="700" textAnchor="middle" fill="#fff">IRON</text><text x="8" y="11.500" fontFamily="Inter, sans-serif" fontSize="3.600" textAnchor="middle" fill="#d0f0fc">HACK</text></svg>
            Ironhack Student Portal
          </Tab>
          <Tab $w={632}><CourseraMark />Coursera | Online Courses &amp; Credentials From Top Educators. Join for Free</Tab>
          <Tab $w={620} $active><CourseraMark />Practice quiz onTangent Lines to Functions | Coursera</Tab>
          <Tab $w={24}><svg width="12" height="12" stroke="#555"><path d="M6 .5v11M.5 6h11" /></svg></Tab>
        </Tabs>

        <Header>
          <svg width="127" height="40" viewBox="0 0 127 40">
            <text x="-.5" y="28" fontFamily="Lato, sans-serif" fontSize="32.500" fontWeight="700" textLength="128" lengthAdjust="spacingAndGlyphs" fill="#0048c8" stroke="#0048c8" strokeWidth="1.100">coursera</text>
          </svg>
          <Explore>Explorer <Chevron w={9} c="#fff" s={1.9} /></Explore>
          <Search>
            <SearchField>Que souhaitez-vous apprendre ?</SearchField>
            <SearchButton><svg width="18" height="18" fill="none" stroke="#fff" strokeWidth="1.200"><circle cx="7.500" cy="7.500" r="6.300" /><path d="M12 12l5 4.500" /></svg></SearchButton>
          </Search>
          <Account>
            <Bell><svg width="24" height="26" viewBox="0 0 24 26" fill="none" stroke="#333" strokeWidth="1.200"><path d="M1 21v-3q4-1 5-6 .3-2.500.3-5Q7 1 12 1t5.700 6q0 2.500.3 5 1 5 5 6v3zM9 21q0 4 3 4t3-4" /></svg></Bell>
            <Rule />
            <svg width="40" height="40"><circle cx="20" cy="20" r="20" fill="#2aa6d4" /><ellipse cx="20" cy="14.500" rx="5" ry="6" fill="#fff" /><path d="M8.500 32v-3.500q0-4 5.500-5 6 2.500 12 0 5.500 1 5.500 5V32z" fill="#fff" /></svg>
            <UserName>Maxime Cormier</UserName>
            <Chevron w={12} c="#555" />
          </Account>
        </Header>
        <Crumbs>
          <Crumb $link>Data Science Math Skills</Crumb>
          <CrumbArrow><svg width="5" height="9" fill="none" stroke="#888"><path d="M.5.500l3.500 4-3.500 4" /></svg></CrumbArrow>
          <Crumb $link>Semaine 3</Crumb>
          <CrumbArrow><svg width="5" height="9" fill="none" stroke="#888"><path d="M.5.500l3.500 4-3.500 4" /></svg></CrumbArrow>
          <Crumb>Practice quiz onTangent Lines to Functions</Crumb>
          <Pager><span>Préc.</span><PagerRule /><span>Suivant</span></Pager>
        </Crumbs>

        <Body>
          <Lessons>
            {sections.map((s) => (
              <React.Fragment key={s.title}>
                <SectionTitle>{s.title}</SectionTitle>
                {s.lessons.map((l) => (
                  <Lesson key={l.name} $active={l.active}>
                    <LessonIcon $done={l.icon === 'done'}>{l.icon === 'done' ? <Check size={20} /> : l.icon === 'book' ? <Book /> : <Play />}</LessonIcon>
                    <LessonText><Strong>{l.kind}</Strong> {l.name}<Length>{l.length}</Length></LessonText>
                  </Lesson>
                ))}
              </React.Fragment>
            ))}
          </Lessons>
          <Track><Thumb /></Track>
          <Rail>
            <RailButton>
              <svg width="18" height="17" fill="none" stroke="#333"><circle cx="2.300" cy="2.500" r="1.500" /><circle cx="2.300" cy="8.500" r="1.500" /><circle cx="2.300" cy="14.500" r="1.500" /><path d="M6.500 2.500H17M6.500 8.500H17M6.500 14.500H17" /></svg>
            </RailButton>
          </Rail>
          <Main>
            <Kicker>QUIZ POUR S'EXERCER • 10 MIN</Kicker>
            <Title>Practice quiz onTangent Lines to Functions</Title>
            <Step $h={103}>
              <StepMark $pt={46}><Check size={24} /></StepMark>
              <StepBody $pt={50}>
                <StepCopy><StepTitle>Soumettre votre devoir</StepTitle></StepCopy>
                <Retry>Essayer à nouveau</Retry>
              </StepBody>
            </Step>
            <Step $h={126}>
              <StepMark $pt={22}><Check size={24} /></StepMark>
              <StepBody $pt={26}>
                <StepCopy>
                  <StepTitle>Recevoir une note</StepTitle>
                  <Criteria><b>POUR RÉUSSIR</b><span>75 % ou plus</span></Criteria>
                </StepCopy>
                <Grade>
                  <GradeRow>
                    <div><StepTitle>Note</StepTitle><Score>100 %</Score></div>
                    <Feedback>Voir les commentaires</Feedback>
                  </GradeRow>
                  <GradeNote>Nous conservons votre score le plus élevé</GradeNote>
                </Grade>
              </StepBody>
            </Step>
            <Reactions>
              <svg width="20" height="21" viewBox="0 0 20 21" fill="none" stroke="#444"><path d="M.8 9h2.400Q7 6.500 8.300 1.700 9.500-.2 11 1.500q1 2.500-1 7 4-1 7.500.2 1.700 1.300.8 3 1.200 1.700-.2 3.200.5 1.800-1.200 2.600.2 2.700-2 2.700H5.500L2.500 18 .8 9z" /></svg>
              <svg width="20" height="21" viewBox="0 0 20 21" fill="none" stroke="#444"><path d="M1 12h3.500Q8 15 9 19q1.300 2 2.700.2 1-2.800-1-7 4 1 6.800-.5 2-1.200 1.200-3.200.5-1.700-.7-3.200-.2-2-1.700-2.700-.8-1.800-2.500-1.800H5.500L2.500 2.700Q.5 6 1 12z" /></svg>
              <svg width="16" height="21" viewBox="0 0 16 21" fill="none" stroke="#444" strokeWidth="1.100"><path d="M1.500 21V.800h13.500v10.200H1.500" /></svg>
            </Reactions>
          </Main>
          <PageTrack />
        </Body>
      </Window>

      <DockShade>
        <Dock>
          {dock.map((group, g) => (
            <React.Fragment key={g}>
              {g > 0 && <DockRule />}
              {group.map(({ icon: Icon, running }, i) => (
                <DockItem key={i}><Icon />{running && <Running />}</DockItem>
              ))}
            </React.Fragment>
          ))}
        </Dock>
      </DockShade>
    </Desktop>
  );
}
